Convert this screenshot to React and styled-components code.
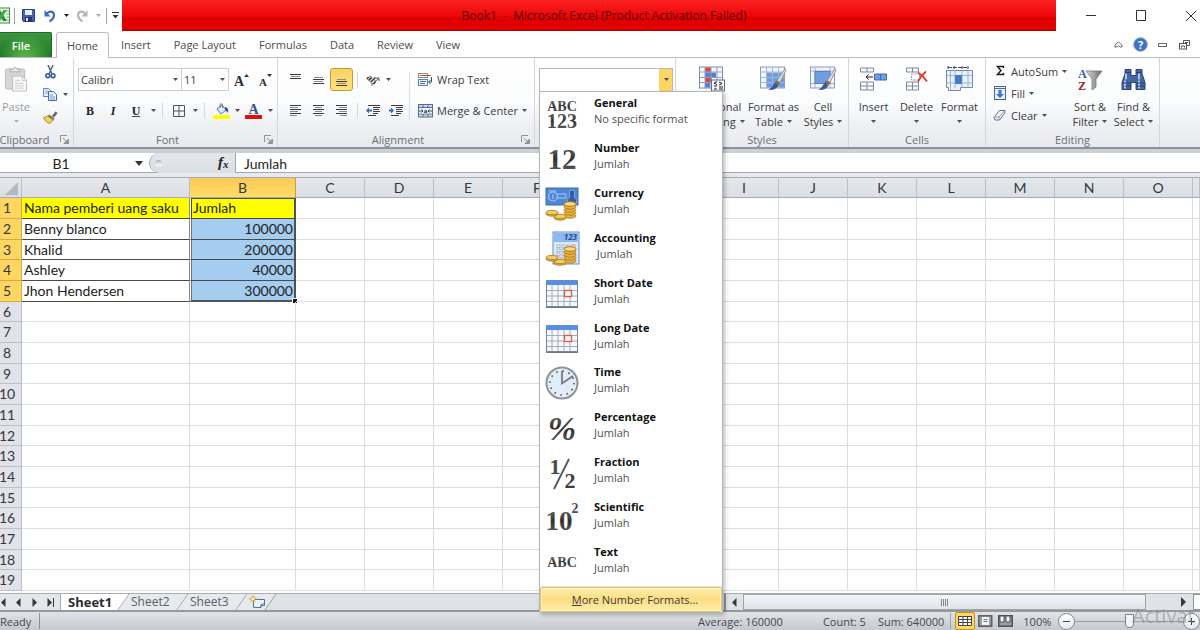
import React from 'react';
import styled, { createGlobalStyle, css } from 'styled-components';

const UI_FONT = '"Open Sans", "Noto Sans", sans-serif';
const CELL_FONT = 'Lato, "Open Sans", sans-serif';
const SERIF_FONT = '"Liberation Serif", serif';

const GlobalStyle = createGlobalStyle`
  * {
    box-sizing: border-box;
  }
  body {
    margin: 0;
    background: #ffffff;
    font-family: ${UI_FONT};
    font-size: 11px;
    color: #3b3b3b;
    overflow: hidden;
  }
  button, input, select {
    font: inherit;
    color: inherit;
    margin: 0;
    padding: 0;
    border: 0;
    background: none;
  }
  svg {
    display: block;
    flex: none;
  }
`;

const Window = styled.div`
  position: relative;
  display: flex;
  flex-direction: column;
  min-height: 100vh;
  overflow: hidden;
`;

/* ---------- title bar ---------- */

const TitleBar = styled.header`
  display: flex;
  height: 31px;
`;

const QuickAccess = styled.div`
  display: flex;
  align-items: center;
  flex: none;
  width: 122px;
`;

const IconButton = styled.button`
  display: flex;
  align-items: center;
  justify-content: center;
  flex: none;
  width: ${(p) => p.$w || 24}px;
  height: 23px;
`;

const Divider = styled.span`
  flex: none;
  width: 1px;
  height: ${(p) => p.$h || 16}px;
  margin: 0 4px;
  background: ${(p) => p.$color || '#d5d7db'};
`;

const Caption = styled.div`
  display: flex;
  align-items: center;
  justify-content: center;
  flex: 1;
  padding-left: 30px;
  border-bottom: 1px solid #a80000;
  background: linear-gradient(#fd2222, #ee0808 50%, #df0000 60%, #e10000);
  color: #5e0404;
  font-size: 12px;
  white-space: pre;
`;

const WindowControls = styled.div`
  display: flex;
  align-items: center;
  flex: none;
  width: 144px;
  padding-left: 10px;
  overflow: hidden;
`;

/* ---------- tabs ---------- */

const TabRow = styled.nav`
  display: flex;
  align-items: stretch;
  height: 27px;
  padding-top: 1px;
  padding-right: 5px;
  border-bottom: 1px solid #b9bcc1;
`;

const FileTab = styled.button`
  width: 52px;
  margin-right: 4px;
  padding-right: 9px;
  border: 1px solid #1d6b22;
  border-width: 1px 1px 0 0;
  border-radius: 0 2px 0 0;
  background: radial-gradient(ellipse at 50% 110%, #63bb4c, rgba(60, 150, 50, 0) 70%), linear-gradient(#3b9440, #1c7a26);
  color: #ffffff;
  font-weight: 600;
`;

const Tab = styled.button`
  margin-right: 1px;
  padding: 0 11px;
  color: #4c4c4c;
  ${(p) =>
    p.$active &&
    css`
      width: 53px;
      height: 26px;
      padding: 0;
      border: 1px solid #b9bcc1;
      border-bottom: 0;
      border-radius: 3px 3px 0 0;
      background: #ffffff;
    `}
`;

const TabTools = styled.div`
  display: flex;
  align-items: center;
  margin-left: auto;
`;

/* ---------- ribbon ---------- */

const Ribbon = styled.section`
  display: flex;
  height: 91px;
  margin-left: -8px;
  border-bottom: 2px solid #8d9299;
  background: linear-gradient(#ffffff, #fbfcfd 50%, #eef0f3 75%, #e8eaee);
`;

const Group = styled.div`
  display: flex;
  flex-direction: column;
  flex: none;
  width: ${(p) => p.$w}px;
  border-right: 1px solid #d4d7dc;
`;

const GroupBody = styled.div`
  display: flex;
  flex: 1;
  padding-left: ${(p) => p.$pad || 0}px;
`;

const GroupFooter = styled.div`
  display: flex;
  align-items: center;
  height: 16px;
  padding-right: ${(p) => (p.$launcher ? 2 : 0)}px;
  color: #6a7078;
`;

const GroupName = styled.span`
  flex: 1;
  text-align: center;
`;

const Launcher = styled.button`
  width: 14px;
  height: 14px;
  display: flex;
  align-items: center;
  justify-content: center;
`;

const BigButton = styled.button`
  display: flex;
  flex-direction: column;
  align-items: center;
  flex: none;
  width: ${(p) => p.$w}px;
  padding-top: 8px;
  line-height: 15px;
  white-space: nowrap;
  color: ${(p) => (p.$dim ? '#9b9b9b' : 'inherit')};

  > svg {
    height: 26px;
    margin-bottom: 7px;
  }
`;

const ButtonLine = styled.span`
  display: flex;
  align-items: center;
  justify-content: center;
  gap: 4px;
  height: 15px;
`;

const SmallColumn = styled.div`
  display: flex;
  flex-direction: column;
  width: ${(p) => p.$w}px;
  padding-top: 2px;
`;

const ToolRows = styled.div`
  display: flex;
  flex-direction: column;
  gap: 8px;
  padding-top: 10px;
`;

const ToolRow = styled.div`
  display: flex;
  align-items: center;
  height: 23px;
`;

const LabelButton = styled.button`
  display: flex;
  align-items: center;
  gap: 4px;
  height: ${(p) => (p.$tight ? 22 : 23)}px;
  padding-left: 5px;
  white-space: nowrap;
`;

const ToggleButton = styled(IconButton)`
  ${(p) =>
    p.$on &&
    css`
      border: 1px solid #c79a3d;
      border-radius: 3px;
      background: linear-gradient(#fbd35f, #ffe27b);
    `}
`;

const TallDivider = styled.span`
  width: 1px;
  height: 48px;
  margin: 14px 3px 0 2px;
  background: #dcdee2;
`;

const Field = styled.label`
  display: flex;
  align-items: center;
  width: ${(p) => p.$w}px;
  height: 23px;
  padding: 0 3px 0 2px;
  border: 1px solid #cbced3;
  margin-right: -1px;
  background: #ffffff;

  input {
    flex: 1;
    min-width: 0;
    outline: 0;
  }
`;

const FormatAnchor = styled.div`
  position: relative;
  width: 134px;
  height: 24px;
  margin: 10px 0 0 4px;
`;

const FormatSelect = styled.select`
  appearance: none;
  width: 100%;
  height: 24px;
  border: 1px solid #b4b7bc;
  background: linear-gradient(#fbd769, #fdd65f) right / 13px 100% no-repeat #ffffff;
`;

const SelectCaret = styled.span`
  position: absolute;
  top: 10px;
  right: 4px;
  pointer-events: none;
`;

/* ---------- number format menu ---------- */

const Menu = styled.div`
  position: absolute;
  z-index: 10;
  top: 23px;
  left: 0;
  width: 184px;
  border: 1px solid #b3b6bb;
  background: #ffffff;
  box-shadow: 2px 2px 4px rgba(0, 0, 0, 0.25);
`;

const MenuList = styled.div`
  display: grid;
  grid-auto-rows: 1fr;
  height: 495px;
  border-bottom: 1px solid #e2e4e7;
`;

const MenuItem = styled.button`
  display: grid;
  grid-template-columns: 44px 1fr;
  column-gap: 10px;
  text-align: left;
`;

const MenuIcon = styled.span`
  display: flex;
  align-items: center;
  justify-content: center;
`;

const MenuText = styled.span`
  display: flex;
  flex-direction: column;
  padding-top: 3px;
  line-height: 16px;
  color: #4f4f4f;
  white-space: pre;

  strong {
    color: #111111;
    font-weight: 700;
  }
`;

const MoreFormats = styled.button`
  display: block;
  width: 100%;
  height: 25px;
  padding-left: 8px;
  border: 1px solid #e3c463;
  border-radius: 2px;
  box-shadow: inset 0 0 0 1px #fdf1bd;
  background: linear-gradient(#fdeeb0, #fbdf83 45%, #fbe08a 60%, #fdf0ae);
`;

/* ---------- formula bar ---------- */

const FormulaBar = styled.section`
  display: flex;
  height: 28px;
  border-top: 4px solid #ccd0d6;
  border-bottom: 4px solid #e6e9ed;
  background: #ffffff;
  box-shadow: inset 0 -1px 0 #a4a8ae;
  font-family: ${CELL_FONT};
  font-size: 14px;
  color: #1f1f1f;
`;

const NameBox = styled.label`
  display: flex;
  align-items: center;
  justify-content: space-between;
  width: 149px;
  height: 20px;
  padding-right: 6px;

  input {
    width: 122px;
    text-align: center;
    outline: 0;
  }
`;

const FunctionArea = styled.div`
  display: flex;
  align-items: center;
  justify-content: space-between;
  width: 87px;
  height: 20px;
  padding: 0 4px 0 5px;
  border: 1px solid #a4a8ae;
  border-width: 0 1px 0 1px;
  border-radius: 10px 0 0 10px;
  background: linear-gradient(#e3e6ea, #dbdee3);
`;

const Knob = styled.span`
  width: 7px;
  height: 7px;
  border-radius: 50%;
  background: linear-gradient(#a9adb3, #eceef1 60%);
`;

const FormulaInput = styled.input`
  flex: 1;
  height: 20px;
  padding-left: 8px;
  outline: 0;
`;

/* ---------- sheet ---------- */

const SheetArea = styled.main`
  flex: 1;
  overflow: hidden;
  background: #ffffff;
`;

const Grid = styled.table`
  width: calc(100% + 6px);
  margin-left: -6px;
  table-layout: fixed;
  border-collapse: separate;
  border-spacing: 0;
  font-family: ${CELL_FONT};
  font-size: 14px;
  line-height: 18px;
  color: #1c1c1c;

  tbody tr {
    height: 21px;
  }
  tbody tr:nth-child(3n) {
    height: 20px;
  }
`;

const ColumnHead = styled.th`
  height: 21px;
  padding: 0;
  border: 1px solid #a6abb2;
  border-left: 0;
  background: ${(p) => (p.$on ? 'linear-gradient(#fac956, #ffdd68)' : 'linear-gradient(#e4e7eb, #dbdfe4)')};
  border-right-color: ${(p) => (p.$on ? '#c99c3f' : '#bcc0c6')};
  font-weight: 400;
  color: #33383f;
`;

const Corner = styled(ColumnHead)`
  svg {
    margin: 2px 0 0 11px;
  }
`;

const RowHead = styled.th`
  padding: 0 1px 0 0;
  border: 0 solid #bcc0c6;
  border-width: 0 1px 1px 0;
  border-color: ${(p) => (p.$on ? '#d3a950' : '#bcc0c6')};
  background: ${(p) => (p.$on ? '#ffd660' : '#e0e3e8')};
  font-weight: 400;
  color: #33383f;
`;

const Cell = styled.td`
  position: relative;
  padding: 0 1px 0 2px;
  border: 0 solid #dadde1;
  border-width: 0 1px 1px 0;
  white-space: nowrap;
  ${(p) =>
    p.$filled &&
    css`
      border-bottom-color: #4a4a4a;
      border-right-color: #8b8b8b;
    `}
  ${(p) =>
    p.$selected &&
    css`
      border-left: 1px solid #ffffff;
      border-right: 2px solid #4d5358;
      background: #a4cdef;
      box-shadow: inset 1px 0 0 #6e757b;
      text-align: ${p.$head ? 'left' : 'right'};
    `}
  ${(p) => p.$head && 'background: #ffff00;'}
  ${(p) => p.$head && p.$selected && 'box-shadow: inset 1px 1px 0 #4d4d3a;'}
  ${(p) => p.$last && 'border-bottom: 2px solid #4d5358;'}
`;

const FillHandle = styled.span`
  position: absolute;
  right: -3px;
  bottom: -3px;
  width: 5px;
  height: 5px;
  border: 1px solid #ffffff;
  border-width: 1px 0 0 1px;
  background: #111111;
`;

/* ---------- sheet tabs ---------- */

const SheetBar = styled.footer`
  display: flex;
  height: 19px;
  border-top: 1px solid #a9adb3;
  border-bottom: 2px solid #9499a0;
  background: #dfe3e8;
`;

const SheetNav = styled.div`
  position: relative;
  z-index: 1;
  display: flex;
  width: 65px;
  margin-left: -4px;
  padding-right: 3px;
  border-right: 1px solid #a9adb3;
  background: #e3e6ea;
`;

const NavButton = styled.button`
  flex: 1;
  display: flex;
  align-items: center;
  justify-content: center;
`;

const SheetTab = styled.button`
  position: relative;
  width: ${(p) => p.$w || 59}px;
  padding-left: 7px;
  text-align: left;
  line-height: 16px;
  font-size: ${(p) => (p.$active ? 13 : 12)}px;
  font-weight: ${(p) => (p.$active ? 700 : 400)};
  color: ${(p) => (p.$active ? '#2c2c2c' : '#5b6068')};

  &::before {
    content: '';
    position: absolute;
    inset: 0 0 0 ${(p) => (p.$active ? '-12px' : '0')};
    border-right: 1px solid #9a9fa6;
    background: ${(p) => (p.$active ? '#ffffff' : '#e6e9ed')};
    transform: skewX(-35deg);
  }

  > span {
    position: relative;
  }
`;

const ScrollBar = styled.div`
  display: flex;
  align-items: center;
  width: 476px;
  margin-left: auto;
  border-left: 2px solid #8e9399;
`;

const ScrollThumb = styled.div`
  display: flex;
  align-items: center;
  justify-content: center;
  flex: 1;
  height: 16px;
  border: 1px solid #9ea3aa;
  background: linear-gradient(#f3f5f7, #dfe3e8);
`;

/* ---------- status bar ---------- */

const StatusBar = styled.footer`
  display: flex;
  align-items: center;
  height: 18px;
  background: linear-gradient(#e0e3e7, #c5c9cf);
  color: #45494f;
`;

const StatusText = styled.span`
  margin-right: ${(p) => p.$gap || 0}px;
  white-space: nowrap;
`;

const StatusRight = styled.div`
  display: flex;
  align-items: center;
  width: 502px;
  margin-left: auto;
`;

const ViewButtons = styled.div`
  display: flex;
  margin-right: 8px;
`;

const ViewButton = styled.button`
  display: flex;
  align-items: center;
  justify-content: center;
  width: 20px;
  height: 18px;
  ${(p) =>
    p.$on &&
    css`
      border: 1px solid #c08f2f;
      border-radius: 2px;
      background: #ffd75e;
    `}
`;

const ZoomButton = styled.button`
  display: flex;
  align-items: center;
  justify-content: center;
  flex: none;
  width: 17px;
  height: 17px;
  border: 1px solid #82878e;
  border-radius: 50%;
  background: linear-gradient(#ffffff, #e5e8ec);
`;

const ZoomSlider = styled.input`
  appearance: none;
  flex: 1;
  min-width: 0;
  height: 16px;
  background: linear-gradient(#979ca3, #979ca3) center / 100% 1px no-repeat;

  &::-webkit-slider-thumb {
    appearance: none;
    width: 9px;
    height: 14px;
    border: 1px solid #7d8289;
    border-radius: 1px 1px 5px 5px;
    background: #f3f4f6;
  }
`;

const Watermark = styled.div`
  position: absolute;
  z-index: 20;
  right: 0;
  bottom: 0;
  width: 68px;
  height: 28px;
  overflow: hidden;
  font-size: 20px;
  line-height: 28px;
  white-space: nowrap;
  color: rgba(125, 130, 136, 0.5);
  pointer-events: none;
`;

/* ---------- icons ---------- */

const Caret = ({ color = '#4f4f4f' }) => (
  <svg width="5" height="3" viewBox="0 0 5 3">
    <path d="M0 0h5L2.5 3z" fill={color} />
  </svg>
);

const ExcelIcon = () => (
  <svg width="10" height="17" viewBox="6 0 10 17">
    <rect x="0" y="1" width="15.5" height="15" fill="#e8f4e4" stroke="#3b8b3e" />
    <path d="M11 4h4M12 7h3M12 10h3M11 13h4" stroke="#8fc48a" />
    <path d="M2 3h4l7 11H9z" fill="#2f8a37" />
    <path d="M13 3H9.500L2 14h4z" fill="#4aa544" />
  </svg>
);

const SaveIcon = () => (
  <svg width="13" height="13" viewBox="0 0 13 13">
    <path d="M.5.5h12v12h-11l-1-1z" fill="#4a5fb8" stroke="#2d3c8c" />
    <rect x="3" y="1" width="7" height="5" fill="#e9eefb" />
    <rect x="3" y="8" width="7" height="5" fill="#27336f" />
    <rect x="4" y="9" width="2" height="3" fill="#dfe5f5" />
  </svg>
);

const UndoIcon = ({ flip, color = '#3f6db8' }) => (
  <svg width="12" height="14" viewBox="0 0 12 14">
    <g transform={flip ? 'matrix(-1 0 0 1 12 0)' : undefined}>
      <path d="M2.5 5C5 1.5 10 2 10 6.200C10 9.500 7.500 11 5.500 12.500" fill="none" stroke={color} strokeWidth="2.200" />
      <path d="M.5 1v6.500h6z" fill={color} />
    </g>
  </svg>
);

const CustomizeIcon = () => (
  <svg width="7" height="7" viewBox="0 0 7 7">
    <path d="M0 .5h7" stroke="#333" />
    <path d="M.5 3h6L3.500 6.500z" fill="#333" />
  </svg>
);

const LauncherIcon = () => (
  <svg width="9" height="9" viewBox="0 0 9 9">
    <path d="M.5 7V.5H7" fill="none" stroke="#8d9299" />
    <path d="M3 3l3 3" stroke="#8d9299" />
    <path d="M4 8.500h4.500V4z" fill="#8d9299" stroke="#8d9299" />
  </svg>
);

const PasteIcon = () => (
  <svg width="24" height="27" viewBox="0 0 24 27">
    <rect x="1" y="3" width="20" height="21" rx="2" fill="#d6d6d8" stroke="#bcbcc0" />
    <path d="M6 6V3.500h3Q11 -1 13 3.500h3V6z" fill="#f0f0f1" stroke="#aaaaae" />
    <path d="M8.500 10.500h10l4.500 4.500v11H8.500z" fill="#f7f7f8" stroke="#bdbdc1" />
    <path d="M18.500 10.500V15H23M11 15h5M11 18h9M11 20.500h9M11 23h9" fill="none" stroke="#cbcbcf" />
  </svg>
);

const CutIcon = () => (
  <svg width="11" height="14" viewBox="0 0 11 14">
    <path d="M3 0l4 9M8 0L4 9" stroke="#56657e" strokeWidth="1.500" />
    <circle cx="2.800" cy="10.700" r="1.900" fill="none" stroke="#2f5aa8" strokeWidth="1.600" />
    <circle cx="8" cy="10.700" r="1.900" fill="none" stroke="#2f5aa8" strokeWidth="1.600" />
  </svg>
);

const CopyIcon = () => (
  <svg width="14" height="13" viewBox="0 0 14 13">
    <path d="M.5.5h5l2 2v6h-7z" fill="#e9f1fc" stroke="#5c86c4" />
    <path d="M2 3h3M2 5h4" stroke="#7fa3d8" />
    <path d="M5.500 3.500h5l3 3v6h-8z" fill="#e9f1fc" stroke="#3f6bb0" />
    <path d="M7 7h3M7 9h5M7 11h5" stroke="#7399d3" />
  </svg>
);

const PainterIcon = () => (
  <svg width="15" height="13" viewBox="0 0 15 13">
    <path d="M9 5l3.500-4.500 2 1.500L11 6.500z" fill="#5c5f78" />
    <path d="M6 3.500l5.500 4-1.500 2-5.500-4z" fill="#77704c" />
    <path d="M4.500 5L10 9l-3 3.500C4 12 2 9.500.5 7z" fill="#f0d264" stroke="#b18d2f" />
  </svg>
);

const SizeIcon = ({ small }) => (
  <svg width="17" height="16" viewBox="0 0 17 16">
    <text x={small ? 3 : 1} y="14" fontFamily={SERIF_FONT} fontWeight="700" fontSize={small ? 11 : 14} fill="#2e2e2e">A</text>
    <path d={small ? 'M11 2h5l-2.500 3z' : 'M11 5h5l-2.500-3z'} fill="#333" />
  </svg>
);

const GlyphIcon = ({ children, italic, underline }) => (
  <svg width="12" height="14" viewBox="0 0 12 14">
    <text
      x="6"
      y="11"
      textAnchor="middle"
      fontFamily={SERIF_FONT}
      fontWeight="700"
      fontSize="12"
      fontStyle={italic ? 'italic' : 'normal'}
      fill="#222"
    >
      {children}
    </text>
    {underline && <path d="M2 12.500h8" stroke="#444" />}
  </svg>
);

const BordersIcon = () => (
  <svg width="12" height="12" viewBox="0 0 12 12">
    <path d="M.5.5h11v11H.5zM6 .5v11M.5 6h11" fill="none" stroke="#555" />
  </svg>
);

const FillColorIcon = () => (
  <svg width="17" height="16" viewBox="0 0 17 16">
    <path d="M4 6l5-4 4 5-5 4z" fill="#dfe9f7" stroke="#56749f" />
    <path d="M7 5V1.500Q8 0 9.500 1.500V5" fill="none" stroke="#6b7688" />
    <path d="M12 4q4 0 3 6-1.500-2-3-3z" fill="#35588f" />
    <rect x="0" y="12" width="17" height="4" fill="#ffff00" />
  </svg>
);

const FontColorIcon = () => (
  <svg width="17" height="16" viewBox="0 0 17 16">
    <text x="8.500" y="11" textAnchor="middle" fontFamily={SERIF_FONT} fontWeight="700" fontSize="14" fill="#35508c">A</text>
    <rect x="0" y="12" width="17" height="4" fill="#e01010" />
  </svg>
);

const LinesIcon = ({ lines }) => (
  <svg width="13" height="13" viewBox="0 0 13 13">
    {lines.map(([x, y, w]) => (
      <path key={y} d={`M${x} ${y}.5h${w}`} stroke={w < 10 ? '#8a8a8a' : '#3a3a3a'} />
    ))}
  </svg>
);

const LINES = {
  top: [[1, 1, 11], [2, 3, 9], [1, 5, 11]],
  middle: [[2, 4, 9], [1, 6, 11], [2, 8, 9], [1, 10, 11]],
  bottom: [[2, 6, 9], [1, 8, 11], [2, 10, 9], [1, 12, 11]],
  left: [[1, 1, 11], [1, 3, 8], [1, 5, 11], [1, 7, 8], [1, 9, 11], [1, 11, 7]],
  center: [[1, 1, 11], [3, 3, 7], [1, 5, 11], [3, 7, 7], [1, 9, 11], [3, 11, 7]],
  right: [[1, 1, 11], [4, 3, 8], [1, 5, 11], [4, 7, 8], [1, 9, 11], [5, 11, 7]],
};

const OrientIcon = () => (
  <svg width="14" height="13" viewBox="0 0 14 13">
    <text x="0" y="5" transform="rotate(45 0 5)" fontFamily={SERIF_FONT} fontWeight="700" fontSize="10" fill="#333">ab</text>
    <path d="M5 12.500l7.500-7M13 8V5H10" fill="none" stroke="#555" />
  </svg>
);

const IndentIcon = ({ out }) => (
  <svg width="14" height="12" viewBox="0 0 14 12">
    <path d="M2 .5h12M7 2.500h7M7 4.500h6M7 6.500h7M7 8.500h5M2 10.500h8" stroke="#3d3d3d" />
    <path d={out ? 'M0 5.500l3-3v2h3v2H3v2z' : 'M5 5.500l-3-3v2H0v2h2v2z'} fill="#3c68bd" />
  </svg>
);

const WrapIcon = () => (
  <svg width="15" height="14" viewBox="0 0 15 14">
    <rect x=".5" y=".5" width="9" height="4" fill="#f3f3f3" stroke="#8c8c8c" />
    <path d="M2 2.500h11M2 8h6M2 10h6" stroke="#a55c3c" />
    <rect x=".5" y="6.500" width="9" height="6" fill="#eef3fb" stroke="#6c7d99" />
    <path d="M2 8.500h6M2 10.500h5" stroke="#4c6ba5" />
    <path d="M13.500 4v5H11M12.500 7l-2 2 2 2" fill="none" stroke="#2f4f8c" />
  </svg>
);

const MergeIcon = () => (
  <svg width="15" height="14" viewBox="0 0 15 14">
    <rect x=".5" y=".5" width="14" height="12.500" fill="#c7d7ee" stroke="#5a6f93" />
    <path d="M.5 3.500h14M.5 10h14M5 .5v3M10 .5v3M5 10v3M10 10v3" stroke="#5a6f93" />
    <rect x="1" y="4" width="13" height="5.500" fill="#f1f5fb" />
    <path d="M1 7h3.500M10.500 7H14M3.500 5.500L5 7 3.500 8.500M11.500 5.500L10 7l1.500 1.500" fill="none" stroke="#26467f" />
    <text x="7.500" y="9" textAnchor="middle" fontFamily={SERIF_FONT} fontWeight="700" fontSize="7" fill="#222">a</text>
  </svg>
);

const ConditionalIcon = () => (
  <svg width="26" height="25" viewBox="0 0 26 25">
    <rect x=".5" y=".5" width="23" height="21" fill="#f7fafd" stroke="#7b8ca8" />
    <rect x="6" y="1" width="6" height="5" fill="#de4444" />
    <rect x="6" y="6" width="11" height="5" fill="#4d7fd6" />
    <rect x="6" y="11" width="7" height="5" fill="#de4444" />
    <rect x="6" y="16" width="5" height="5" fill="#4d7fd6" />
    <path d="M.5 5.500h23M.5 11h23M.5 16h23M6 .5v21M12 .5v21M18 .5v21" stroke="#8fa0bc" />
    <rect x="12.500" y="13.500" width="13" height="11" fill="#f2f5fa" stroke="#5a6f93" />
    <path d="M18 15l-3 1.500 3 1.500M15 19.500h3M15 22.500h3M20 15.500l3 1.500-3 1.500M20 20.500h4M20 22.500h4" fill="none" stroke="#222" />
  </svg>
);

const Brush = () => (
  <g>
    <path d="M25 2l-8 12 3 2 6-12z" fill="#d9d9dc" stroke="#85868c" strokeWidth=".8" />
    <path d="M16.500 14l3.500 2.500-1.500 2.500-4-3z" fill="#8b6b45" />
    <path d="M14.500 16l4 3q-3 5-10 4.500 4-2.500 6-7.500z" fill="#3a5a94" />
  </g>
);

const TableFormatIcon = () => (
  <svg width="27" height="25" viewBox="0 0 27 25">
    <rect x=".5" y=".5" width="24" height="21" fill="#f2f6fc" stroke="#8a9cb8" />
    <rect x="6" y="6" width="18" height="15" fill="#6f9de0" />
    <path d="M.5 5.500h24M.5 11h24M.5 16h24M6.500 .5v21M12.500 .5v21M18.500 .5v21" stroke="#a3b8da" />
    <Brush />
  </svg>
);

const CellStylesIcon = () => (
  <svg width="27" height="25" viewBox="0 0 27 25">
    <rect x=".5" y=".5" width="24" height="21" fill="#f2f6fc" stroke="#8a9cb8" />
    <path d="M.5 4.500h24M.5 17h24M5 .5v21M20 .5v21" stroke="#a3b3cc" />
    <rect x="5" y="5" width="15" height="12" fill="#6f9de0" stroke="#5581c6" />
    <Brush />
  </svg>
);

const InsertIcon = () => (
  <svg width="27" height="25" viewBox="0 0 27 25">
    <path d="M.5 1.500h13v4H.5zM7 1.500v4M.5 15.500h13v8H.5zM7 15.500v8M.5 19.500h13" fill="#f7f9fc" stroke="#7c899c" />
    <path d="M14.500 7.500h12v6h-12z" fill="#6f9de0" stroke="#3f69b0" />
    <path d="M20.500 7.500v6" stroke="#3f69b0" />
    <path d="M13 10.500H6M8.500 8L6 10.500 8.500 13" fill="none" stroke="#222" />
  </svg>
);

const DeleteIcon = () => (
  <svg width="22" height="25" viewBox="0 0 22 25">
    <path d="M.5 1.500h12v4H.5zM6.500 1.500v4M.5 15.500h12v8H.5zM6.500 15.500v8M.5 19.500h12" fill="#f7f9fc" stroke="#7c899c" />
    <path d="M5.500 7.500h8v6h-8z" fill="none" stroke="#8a9cb8" strokeDasharray="2 1" />
    <path d="M12 6q5 3 9 9M20 5q-5 4-8 10" fill="none" stroke="#dd3a28" strokeWidth="1.900" />
  </svg>
);

const FormatIcon = () => (
  <svg width="27" height="26" viewBox="0 0 27 26">
    <path d="M2 1.500h20M2 0v3M8 0v3M16 0v3M22 0v3" stroke="#3d4d68" strokeDasharray="4 1" />
    <path d="M.5 4.500h26v17h-12v3h-12v-3h-2z" fill="#eaf1fb" stroke="#7288ab" />
    <path d="M.5 9.500h26M.5 17h26M4.500 4.500v19M9 4.500v18M16 4.500v17M22 4.500v17" stroke="#9fb3d1" />
    <rect x="9" y="9" width="7" height="9" fill="#4479d4" />
  </svg>
);

const SigmaIcon = () => (
  <svg width="14" height="14" viewBox="0 0 14 14">
    <path d="M10.500 4V2.500h-6L8 6.500l-3.500 4h6V9" fill="none" stroke="#1f1f1f" strokeWidth="1.500" />
  </svg>
);

const FillDownIcon = () => (
  <svg width="14" height="14" viewBox="0 0 14 14">
    <rect x="1.500" y=".5" width="11" height="13" fill="#e6effb" stroke="#4a6597" />
    <path d="M2 2.500h10" stroke="#4a6597" />
    <path d="M5.500 4h3v4H11l-4 4-4-4h2.500z" fill="#3f72c8" />
  </svg>
);

const EraserIcon = () => (
  <svg width="14" height="12" viewBox="0 0 14 12">
    <path d="M1 8.500L6.500 1.500h5.500l-.5 3L6.500 11H2z" fill="#f5f7fa" stroke="#5f6f8a" />
    <path d="M1 8h5l5.500-6M6 8v3" fill="none" stroke="#8c9ab2" />
  </svg>
);

const SortIcon = () => (
  <svg width="26" height="26" viewBox="0 0 26 26">
    <defs>
      <linearGradient id="funnel">
        <stop offset="0" stopColor="#dcdcde" />
        <stop offset="1" stopColor="#66676b" />
      </linearGradient>
    </defs>
    <path d="M9 5h16l-6 8v8l-4 3V13z" fill="url(#funnel)" stroke="#77787c" strokeWidth=".8" />
    <text x="1" y="12" fontFamily={SERIF_FONT} fontWeight="700" fontSize="12" fill="#315fa8">A</text>
    <text x="1" y="24" fontFamily={SERIF_FONT} fontWeight="700" fontSize="12" fill="#8c2c2c">Z</text>
  </svg>
);

const BinocularsIcon = () => (
  <svg width="25" height="25" viewBox="0 0 25 25">
    <path d="M4 3h6v6h5V3h6v4l3 9v7h-9v-7h-5v7H1v-7l3-9z" fill="#44679f" stroke="#2c4575" />
    <path d="M5 7v6M18 7v6M4 14v8M18 14v8" stroke="#a9c2e8" strokeWidth="2" />
    <path d="M1 16.500h9M15 16.500h9M4 6h6M15 6h6M4 19.500h6M15 19.500h9" stroke="#26406f" />
  </svg>
);

const RibbonToggleIcon = () => (
  <svg width="9" height="7" viewBox="0 0 9 7">
    <path d="M1 4l3.500-3L8 4v2H6L4.500 4.500 3 6H1z" fill="#fff" stroke="#6b6b6b" />
  </svg>
);

const HelpIcon = () => (
  <svg width="15" height="15" viewBox="0 0 15 15">
    <circle cx="7.500" cy="7.500" r="6.800" fill="#3f73c2" stroke="#7ca0d8" />
    <text x="7.500" y="11.500" textAnchor="middle" fontFamily={UI_FONT} fontWeight="700" fontSize="11" fill="#fff">?</text>
  </svg>
);

const FlatIcon = () => (
  <svg width="9" height="4" viewBox="0 0 9 4">
    <rect x=".5" y=".5" width="8" height="3" fill="#fff" stroke="#6b6b6b" />
  </svg>
);

const RestoreIcon = () => (
  <svg width="11" height="10" viewBox="0 0 11 10">
    <path d="M4.500 3V.5h6v5H8" fill="none" stroke="#555" />
    <rect x=".5" y="3.500" width="7" height="5.500" fill="#fff" stroke="#555" />
    <path d="M2.500 7.500V6h3v1.500M6 2.500h3" fill="none" stroke="#555" />
  </svg>
);

const WindowIcon = ({ d }) => (
  <svg width="12" height="12" viewBox="0 0 12 12">
    <path d={d} fill="none" stroke="#333" />
  </svg>
);

const SerifIcon = ({ lines, italic }) => (
  <svg width="36" height="38" viewBox="0 0 36 38">
    <defs>
      <linearGradient id="ink" x1="0" y1="0" x2="0" y2="1">
        <stop offset="0" stopColor="#777" />
        <stop offset=".5" stopColor="#2f2f2f" />
        <stop offset="1" stopColor="#6a6a6a" />
      </linearGradient>
    </defs>
    {lines.map(([text, x, y, size]) => (
      <text
        key={text + y}
        x={x}
        y={y}
        textAnchor="middle"
        fontFamily={SERIF_FONT}
        fontWeight="700"
        fontStyle={italic ? 'italic' : 'normal'}
        fontSize={size}
        fill="url(#ink)"
      >
        {text}
      </text>
    ))}
  </svg>
);

const FractionIcon = () => (
  <svg width="36" height="38" viewBox="0 0 36 38">
    <text x="11" y="19" textAnchor="middle" fontFamily={SERIF_FONT} fontWeight="700" fontSize="22" fill="#4a4a4a">1</text>
    <text x="26" y="33" textAnchor="middle" fontFamily={SERIF_FONT} fontWeight="700" fontSize="22" fill="#3e3e3e">2</text>
    <path d="M25 4L10 34" stroke="#555" strokeWidth="1.800" />
  </svg>
);

const Coins = () => (
  <g fill="#e5b23c" stroke="#a9761a" strokeWidth=".8">
    {[30, 27, 24, 21, 18].map((y) => (
      <ellipse key={y} cx="26" cy={y} rx="6" ry="2.200" />
    ))}
    <ellipse cx="16" cy="32" rx="6" ry="2.200" />
    <ellipse cx="16" cy="30.500" rx="6" ry="2.200" fill="#f3cd67" />
    <ellipse cx="8" cy="28" rx="6" ry="2.200" />
    <ellipse cx="8" cy="26.500" rx="6" ry="2.200" fill="#f3cd67" />
    <ellipse cx="26" cy="18" rx="6" ry="2.200" fill="#f8dc86" />
  </g>
);

const CurrencyIcon = () => (
  <svg width="36" height="36" viewBox="0 0 36 36">
    <rect x="2" y="2" width="32" height="17" fill="#4f86d6" stroke="#3a6cb8" />
    <circle cx="9" cy="10.500" r="4.500" fill="none" stroke="#a6c8f4" strokeWidth="1.200" />
    <path d="M9 8v5M13 8h9v4h-9M5 5h7" fill="none" stroke="#a6c8f4" />
    <path d="M23 17q0-5 3-6-2-7 2-7t2 7q3 1 3 6z" fill="#2f5ea9" stroke="#8db4ea" strokeWidth=".8" />
    <Coins />
  </svg>
);

const AccountingIcon = () => (
  <svg width="36" height="36" viewBox="0 0 36 36">
    <rect x="9" y="1" width="26" height="32" fill="#dcebfb" stroke="#5d90d2" />
    <rect x="10" y="2" width="24" height="9" fill="#8db8ef" />
    <text x="33" y="9" textAnchor="end" fontFamily={UI_FONT} fontStyle="italic" fontSize="8" fontWeight="700" fill="#1f4f98">123</text>
    {[14, 18, 22, 26].map((y) =>
      [13, 18, 23, 28].map((x) => (
        <rect key={`${x}-${y}`} x={x} y={y} width="3" height="2.500" fill="#fff" stroke={x === 28 ? '#d8664d' : '#8a9ab2'} strokeWidth=".7" />
      ))
    )}
    <Coins />
  </svg>
);

const CalendarIcon = () => (
  <svg width="36" height="32" viewBox="0 0 36 32">
    <rect x="2.500" y="2.500" width="31" height="26" fill="#f5f9fe" stroke="#7b8797" />
    <rect x="2" y="2" width="32" height="5" fill="#5b8ce0" />
    <path d="M3 12.500h30M3 18h30M3 23.500h30M8 7v21M14 7v21M20 7v21M26 7v21" stroke="#9aa6b8" strokeWidth=".9" />
    <rect x="20.500" y="12.500" width="7" height="6" fill="#fff" stroke="#e0603a" strokeWidth="1.400" />
    <path d="M2 29.500h32" stroke="#6e7682" />
  </svg>
);

const ClockIcon = () => (
  <svg width="36" height="36" viewBox="0 0 36 36">
    <circle cx="18" cy="17" r="15.500" fill="#e3edf8" stroke="#8c939c" strokeWidth="2" />
    <circle cx="18" cy="17" r="12" fill="none" stroke="#4a5562" strokeWidth="1.700" strokeDasharray="1.500 4.783" />
    <path d="M18 5v12.500l11-7.500" fill="none" stroke="#6c7480" strokeWidth="1.700" />
  </svg>
);

const NewSheetIcon = () => (
  <svg width="16" height="15" viewBox="0 0 16 15">
    <path d="M4.500 4.500h11v6h-3l-2 2h-6z" fill="#eef3fb" stroke="#54709f" />
    <path d="M7 12.500h5v-3l3.500-1" fill="none" stroke="#54709f" />
    <path d="M4 0v8M0 4h8M1.500 1.500l5 5M6.500 1.500l-5 5" stroke="#dc9b2c" />
    <circle cx="4" cy="4" r="1.500" fill="#fff0b3" />
  </svg>
);

const Arrow = ({ left, bar }) => (
  <svg width="9" height="9" viewBox="0 0 9 9">
    <path d={left ? 'M6.500 0v9L2 4.500z' : 'M2.500 0v9L7 4.500z'} fill="#333940" />
    {bar && <path d={left ? 'M.5 0v9' : 'M8.500 0v9'} stroke="#333940" />}
  </svg>
);

const ViewIcon = ({ kind }) => (
  <svg width="15" height="12" viewBox="0 0 15 12">
    {kind === 'normal' && <path d="M.5 1.500h13v9H.5zM.5 4.500h13M.5 7.500h13M5 1.500v9M9.500 1.500v9" fill="#fff" stroke="#444" />}
    {kind === 'layout' && (
      <>
        <rect x=".75" y=".75" width="13" height="10.500" fill="#9a9ea4" stroke="#5f6368" strokeWidth="1.500" />
        <path d="M4 2h7v8H4z" fill="#f3f4f6" />
        <path d="M5.500 4.500h4M5.500 6.500h4" stroke="#777" />
      </>
    )}
    {kind === 'break' && (
      <>
        <rect x=".75" y=".75" width="13.500" height="10.500" fill="#9a9ea4" stroke="#4f5358" strokeWidth="1.500" />
        <path d="M2 1h4v6H2zM8 1h4v6H8z" fill="#f3f4f6" stroke="#4f5358" />
      </>
    )}
  </svg>
);

/* ---------- data ---------- */

const FORMATS = [
  { name: 'General', sample: 'No specific format', icon: <SerifIcon lines={[['ABC', 18, 16, 14], ['123', 18, 33, 20]]} /> },
  { name: 'Number', sample: 'Jumlah', icon: <SerifIcon lines={[['12', 18, 29, 29]]} /> },
  { name: 'Currency', sample: 'Jumlah', icon: <CurrencyIcon /> },
  { name: 'Accounting', sample: ' Jumlah', icon: <AccountingIcon /> },
  { name: 'Short Date', sample: 'Jumlah', icon: <CalendarIcon /> },
  { name: 'Long Date', sample: 'Jumlah', icon: <CalendarIcon /> },
  { name: 'Time', sample: 'Jumlah', icon: <ClockIcon /> },
  { name: 'Percentage', sample: 'Jumlah', icon: <SerifIcon italic lines={[['%', 18, 30, 34]]} /> },
  { name: 'Fraction', sample: 'Jumlah', icon: <FractionIcon /> },
  { name: 'Scientific', sample: 'Jumlah', icon: <SerifIcon lines={[['10', 15, 30, 27], ['2', 31, 13, 14]]} /> },
  { name: 'Text', sample: 'Jumlah', icon: <SerifIcon lines={[['ABC', 18, 22, 14]]} /> },
];

const ROWS = [
  ['Nama pemberi uang saku', 'Jumlah'],
  ['Benny blanco', '100000'],
  ['Khalid', '200000'],
  ['Ashley', '40000'],
  ['Jhon Hendersen', '300000'],
];

const COLUMNS = 'ABCDEFGHIJKLMNO'.split('');
const TABS = ['Home', 'Insert', 'Page Layout', 'Formulas', 'Data', 'Review', 'View'];

/* ---------- parts ---------- */

const RibbonGroup = ({ name, width, pad, launcher, children }) => (
  <Group $w={width}>
    <GroupBody $pad={pad}>{children}</GroupBody>
    <GroupFooter $launcher={launcher}>
      <GroupName>{name}</GroupName>
      {launcher && (
        <Launcher aria-label={`${name} settings`}>
          <LauncherIcon />
        </Launcher>
      )}
    </GroupFooter>
  </Group>
);

const LargeButton = ({ icon, top, bottom, width, dim }) => (
  <BigButton $w={width} $dim={dim}>
    {icon}
    <ButtonLine>{top}</ButtonLine>
    <ButtonLine>
      {bottom}
      <Caret color={dim ? '#b5b5b5' : undefined} />
    </ButtonLine>
  </BigButton>
);

const CaretButton = ({ label, width = 10, color }) => (
  <IconButton $w={width} aria-label={label}>
    <Caret color={color} />
  </IconButton>
);

function NumberFormatMenu() {
  return (
    <Menu role="menu">
      <MenuList>
        {FORMATS.map((format) => (
          <MenuItem key={format.name} role="menuitem">
            <MenuIcon>{format.icon}</MenuIcon>
            <MenuText>
              <strong>{format.name}</strong>
              <span>{format.sample}</span>
            </MenuText>
          </MenuItem>
        ))}
      </MenuList>
      <MoreFormats role="menuitem">
        <u>M</u>ore Number Formats...
      </MoreFormats>
    </Menu>
  );
}

function Sheet() {
  return (
    <SheetArea>
      <Grid>
        <colgroup>
          <col width="28" />
          <col width="168" />
          <col width="106" />
          {COLUMNS.slice(2).map((c) => (
            <col key={c} width="69" />
          ))}
          <col />
        </colgroup>
        <thead>
          <tr>
            <Corner>
              <svg width="13" height="13" viewBox="0 0 13 13">
                <path d="M13 0v13H0z" fill="#b4b9c0" />
              </svg>
            </Corner>
            {COLUMNS.map((c) => (
              <ColumnHead key={c} $on={c === 'B'}>{c}</ColumnHead>
            ))}
            <ColumnHead />
          </tr>
        </thead>
        <tbody>
          {Array.from({ length: 19 }, (_, i) => {
            const row = ROWS[i];
            return (
              <tr key={i}>
                <RowHead $on={!!row}>{i + 1}</RowHead>
                <Cell $filled={!!row} $head={i === 0}>{row && row[0]}</Cell>
                <Cell $filled={!!row} $selected={!!row} $head={i === 0} $last={i === 4}>
                  {row && row[1]}
                  {i === 4 && <FillHandle />}
                </Cell>
                {COLUMNS.slice(2).map((c) => (
                  <Cell key={c} />
                ))}
                <Cell />
              </tr>
            );
          })}
        </tbody>
      </Grid>
    </SheetArea>
  );
}

export default function App() {
  return (
    <Window>
      <GlobalStyle />
      <TitleBar>
        <QuickAccess>
          <ExcelIcon />
          <Divider $color="#a0a0a0" />
          <IconButton $w={18} aria-label="Save"><SaveIcon /></IconButton>
          <IconButton $w={25} aria-label="Undo"><UndoIcon /></IconButton>
          <CaretButton label="Undo history" width={8} color="#222" />
          <IconButton $w={24} aria-label="Redo"><UndoIcon flip color="#b4b7ba" /></IconButton>
          <CaretButton label="Redo history" width={8} color="#a8a8a8" />
          <Divider $color="#a0a0a0" />
          <IconButton $w={8} aria-label="Customize toolbar"><CustomizeIcon /></IconButton>
        </QuickAccess>
        <Caption>{'Book1  -  Microsoft Excel (Product Activation Failed)'}</Caption>
        <WindowControls>
          <IconButton $w={50} aria-label="Minimize"><WindowIcon d="M1 5.500h10" /></IconButton>
          <IconButton $w={50} aria-label="Maximize"><WindowIcon d="M1.500 .5h9v10h-9z" /></IconButton>
          <IconButton $w={50} aria-label="Close"><WindowIcon d="M1 1l10 10M11 1L1 11" /></IconButton>
        </WindowControls>
      </TitleBar>

      <TabRow>
        <FileTab>File</FileTab>
        {TABS.map((tab) => (
          <Tab key={tab} $active={tab === 'Home'}>{tab}</Tab>
        ))}
        <TabTools>
          <IconButton $w={22} aria-label="Collapse ribbon"><RibbonToggleIcon /></IconButton>
          <IconButton $w={22} aria-label="Help"><HelpIcon /></IconButton>
          <IconButton $w={22} aria-label="Minimize workbook"><FlatIcon /></IconButton>
          <IconButton $w={22} aria-label="Restore workbook"><RestoreIcon /></IconButton>
        </TabTools>
      </TabRow>

      <Ribbon>
        <RibbonGroup name="Clipboard" width={82} launcher>
          <LargeButton icon={<PasteIcon />} top="Paste" width={48} dim />
          <SmallColumn $w={32}>
            <IconButton $w={20} aria-label="Cut"><CutIcon /></IconButton>
            <ToolRow>
              <IconButton $w={20} aria-label="Copy"><CopyIcon /></IconButton>
              <CaretButton label="Copy options" />
            </ToolRow>
            <IconButton $w={20} aria-label="Format painter"><PainterIcon /></IconButton>
          </SmallColumn>
        </RibbonGroup>

        <RibbonGroup name="Font" width={204} pad={4} launcher>
          <ToolRows>
            <ToolRow>
              <Field $w={104}>
                <input aria-label="Font" defaultValue="Calibri" />
                <Caret />
              </Field>
              <Field $w={48}>
                <input aria-label="Font size" defaultValue="11" />
                <Caret />
              </Field>
              <IconButton $w={27} aria-label="Increase font size"><SizeIcon /></IconButton>
              <IconButton $w={18} aria-label="Decrease font size"><SizeIcon small /></IconButton>
            </ToolRow>
            <ToolRow>
              <IconButton aria-label="Bold"><GlyphIcon>B</GlyphIcon></IconButton>
              <IconButton $w={22} aria-label="Italic"><GlyphIcon italic>I</GlyphIcon></IconButton>
              <IconButton aria-label="Underline"><GlyphIcon underline>U</GlyphIcon></IconButton>
              <CaretButton label="Underline style" />
              <Divider />
              <IconButton $w={23} aria-label="Borders"><BordersIcon /></IconButton>
              <CaretButton label="Border style" />
              <Divider />
              <IconButton aria-label="Fill color"><FillColorIcon /></IconButton>
              <CaretButton label="Fill colors" width={8} />
              <IconButton $w={25} aria-label="Font color"><FontColorIcon /></IconButton>
              <CaretButton label="Font colors" width={8} />
            </ToolRow>
          </ToolRows>
        </RibbonGroup>

        <RibbonGroup name="Alignment" width={257} pad={5} launcher>
          <ToolRows>
            <ToolRow>
              <ToggleButton aria-label="Top align"><LinesIcon lines={LINES.top} /></ToggleButton>
              <ToggleButton $w={23} aria-label="Middle align"><LinesIcon lines={LINES.middle} /></ToggleButton>
              <ToggleButton $w={23} $on aria-label="Bottom align"><LinesIcon lines={LINES.bottom} /></ToggleButton>
              <Divider />
              <IconButton $w={22} aria-label="Orientation"><OrientIcon /></IconButton>
              <CaretButton label="Orientation options" width={8} />
            </ToolRow>
            <ToolRow>
              <ToggleButton aria-label="Align left"><LinesIcon lines={LINES.left} /></ToggleButton>
              <ToggleButton $w={23} aria-label="Center"><LinesIcon lines={LINES.center} /></ToggleButton>
              <ToggleButton $w={23} aria-label="Align right"><LinesIcon lines={LINES.right} /></ToggleButton>
              <Divider />
              <IconButton $w={22} aria-label="Decrease indent"><IndentIcon out /></IconButton>
              <IconButton $w={23} aria-label="Increase indent"><IndentIcon /></IconButton>
            </ToolRow>
          </ToolRows>
          <TallDivider />
          <ToolRows>
            <LabelButton><WrapIcon />Wrap Text</LabelButton>
            <LabelButton><MergeIcon />Merge &amp; Center<Caret /></LabelButton>
          </ToolRows>
        </RibbonGroup>

        <RibbonGroup width={141}>
          <FormatAnchor>
            <FormatSelect aria-label="Number format" defaultValue="">
              <option value=""> </option>
            </FormatSelect>
            <SelectCaret><Caret /></SelectCaret>
            <NumberFormatMenu />
          </FormatAnchor>
        </RibbonGroup>

        <RibbonGroup name="Styles" width={173} pad={3}>
          <LargeButton icon={<ConditionalIcon />} top="Conditional" bottom="Formatting" width={66} />
          <LargeButton icon={<TableFormatIcon />} top="Format as" bottom="Table" width={57} />
          <LargeButton icon={<CellStylesIcon />} top="Cell" bottom="Styles" width={42} />
        </RibbonGroup>

        <RibbonGroup name="Cells" width={137} pad={3}>
          <LargeButton icon={<InsertIcon />} top="Insert" width={43} />
          <LargeButton icon={<DeleteIcon />} top="Delete" width={43} />
          <LargeButton icon={<FormatIcon />} top="Format" width={43} />
        </RibbonGroup>

        <RibbonGroup name="Editing" width={174} pad={2}>
          <SmallColumn $w={80}>
            <LabelButton $tight><SigmaIcon />AutoSum<Caret /></LabelButton>
            <LabelButton $tight><FillDownIcon />Fill<Caret /></LabelButton>
            <LabelButton $tight><EraserIcon />Clear<Caret /></LabelButton>
          </SmallColumn>
          <LargeButton icon={<SortIcon />} top="Sort &amp;" bottom="Filter" width={44} />
          <LargeButton icon={<BinocularsIcon />} top="Find &amp;" bottom="Select" width={43} />
        </RibbonGroup>
      </Ribbon>

      <FormulaBar>
        <NameBox>
          <input aria-label="Name box" defaultValue="B1" />
          <svg width="8" height="5" viewBox="0 0 8 5"><path d="M0 0h8L4 5z" fill="#333" /></svg>
        </NameBox>
        <FunctionArea>
          <Knob />
          <svg width="15" height="16" viewBox="0 0 15 16">
            <text x="2" y="12" fontFamily={SERIF_FONT} fontStyle="italic" fontWeight="700" fontSize="15" fill="#222">f</text>
            <text x="7" y="13" fontFamily={SERIF_FONT} fontStyle="italic" fontWeight="700" fontSize="11" fill="#222">x</text>
          </svg>
        </FunctionArea>
        <FormulaInput aria-label="Formula" defaultValue="Jumlah" />
      </FormulaBar>

      <Sheet />

      <SheetBar>
        <SheetNav>
          <NavButton aria-label="First sheet"><Arrow left bar /></NavButton>
          <NavButton aria-label="Previous sheet"><Arrow left /></NavButton>
          <NavButton aria-label="Next sheet"><Arrow /></NavButton>
          <NavButton aria-label="Last sheet"><Arrow bar /></NavButton>
        </SheetNav>
        <SheetTab $w={63} $active><span>Sheet1</span></SheetTab>
        <SheetTab><span>Sheet2</span></SheetTab>
        <SheetTab><span>Sheet3</span></SheetTab>
        <SheetTab $w={29} aria-label="New sheet"><span><NewSheetIcon /></span></SheetTab>
        <ScrollBar>
          <IconButton $w={17} aria-label="Scroll left"><Arrow left /></IconButton>
          <ScrollThumb>
            <svg width="7" height="7" viewBox="0 0 7 7"><path d="M.5 0v7M2.500 0v7M4.500 0v7M6.500 0v7" stroke="#80858c" /></svg>
          </ScrollThumb>
          <IconButton $w={54} aria-label="Scroll right">
            <svg width="54" height="16" viewBox="0 0 54 16">
              <path d="M35 3v10l5-5z" fill="#333940" />
              <rect x="47.500" y=".5" width="10" height="15" fill="#fff" stroke="#8e9399" />
            </svg>
          </IconButton>
        </ScrollBar>
      </SheetBar>

      <StatusBar>
        <StatusText $gap={4}>Ready</StatusText>
        <Divider $color="#8f949b" />
        <StatusRight>
          <StatusText $gap={40}>Average: 160000</StatusText>
          <StatusText $gap={12}>Count: 5</StatusText>
          <StatusText $gap={2}>Sum: 640000</StatusText>
          <Divider $color="#a0a5ab" />
          <ViewButtons>
            <ViewButton $on aria-label="Normal view"><ViewIcon kind="normal" /></ViewButton>
            <ViewButton aria-label="Page layout view"><ViewIcon kind="layout" /></ViewButton>
            <ViewButton aria-label="Page break view"><ViewIcon kind="break" /></ViewButton>
          </ViewButtons>
          <StatusText $gap={7}>100%</StatusText>
          <ZoomButton aria-label="Zoom out">
            <svg width="9" height="9" viewBox="0 0 9 9"><path d="M1 4.500h7" stroke="#444" /></svg>
          </ZoomButton>
          <ZoomSlider type="range" aria-label="Zoom" defaultValue="50" />
          <ZoomButton aria-label="Zoom in">
            <svg width="9" height="9" viewBox="0 0 9 9"><path d="M1 4.500h7M4.500 1v7" stroke="#444" /></svg>
          </ZoomButton>
        </StatusRight>
      </StatusBar>
      <Watermark aria-hidden="true">Activat</Watermark>
    </Window>
  );
}
